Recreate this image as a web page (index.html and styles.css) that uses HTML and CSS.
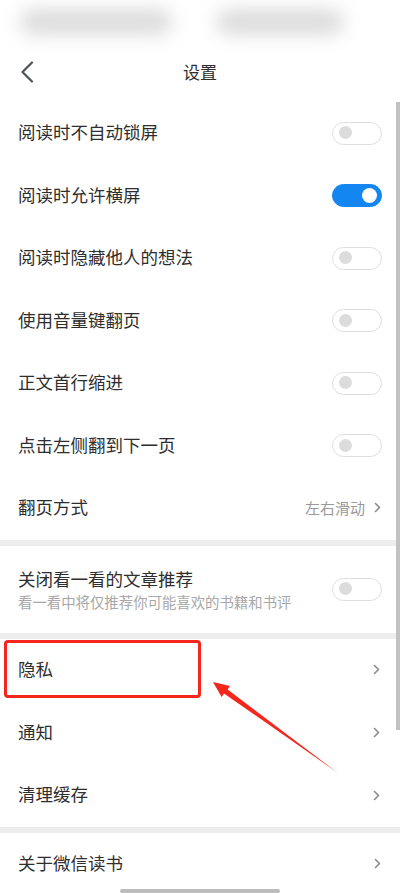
FILE: index.html
```html
<!DOCTYPE html>
<html lang="zh-CN">
<head>
    <meta charset="UTF-8">
    <meta name="viewport" content="width=device-width, initial-scale=1.0">
    <title>设置</title>
    <link rel="stylesheet" href="styles.css">
</head>
<body>
<div class="pantalla">
    <!-- Barra de estado (difuminada) -->
    <div class="estado">
        <div class="mancha mancha-a"></div>
        <div class="mancha mancha-b"></div>
    </div>

    <!-- Cabecera -->
    <header class="cabecera">
        <svg class="atras" width="14" height="22" viewBox="0 0 14 22">
            <path d="M12 1.5 L2.5 11 L12 20.5" fill="none" stroke="#4d5257" stroke-width="2.2" stroke-linecap="round" stroke-linejoin="round"/>
        </svg>
        <h1 class="titulo">设置</h1>
    </header>

    <!-- Grupo lectura -->
    <section class="grupo grupo-lectura">
        <div class="fila"><span class="texto">阅读时不自动锁屏</span><span class="interruptor"></span></div>
        <div class="fila"><span class="texto">阅读时允许横屏</span><span class="interruptor activo"></span></div>
        <div class="fila"><span class="texto">阅读时隐藏他人的想法</span><span class="interruptor"></span></div>
        <div class="fila"><span class="texto">使用音量键翻页</span><span class="interruptor"></span></div>
        <div class="fila"><span class="texto">正文首行缩进</span><span class="interruptor"></span></div>
        <div class="fila"><span class="texto">点击左侧翻到下一页</span><span class="interruptor"></span></div>
        <div class="fila">
            <span class="texto">翻页方式</span>
            <span class="valor">左右滑动
                <svg class="flecha" width="7" height="11" viewBox="0 0 7 11"><path d="M1.5 1.5 L5.5 5.5 L1.5 9.5" fill="none" stroke="#8a8a8a" stroke-width="1.6" stroke-linecap="round" stroke-linejoin="round"/></svg>
            </span>
        </div>
    </section>

    <div class="separador"></div>

    <!-- Grupo recomendaciones -->
    <section class="grupo">
        <div class="fila fila-doble">
            <div>
                <div class="texto">关闭看一看的文章推荐</div>
                <div class="subtexto">看一看中将仅推荐你可能喜欢的书籍和书评</div>
            </div>
            <span class="interruptor"></span>
        </div>
    </section>

    <div class="separador"></div>

    <!-- Grupo general -->
    <section class="grupo grupo-general">
        <div class="fila"><span class="texto">隐私</span><svg class="flecha" width="7" height="11" viewBox="0 0 7 11"><path d="M1.5 1.5 L5.5 5.5 L1.5 9.5" fill="none" stroke="#8a8a8a" stroke-width="1.6" stroke-linecap="round" stroke-linejoin="round"/></svg></div>
        <div class="fila"><span class="texto">通知</span><svg class="flecha" width="7" height="11" viewBox="0 0 7 11"><path d="M1.5 1.5 L5.5 5.5 L1.5 9.5" fill="none" stroke="#8a8a8a" stroke-width="1.6" stroke-linecap="round" stroke-linejoin="round"/></svg></div>
        <div class="fila"><span class="texto">清理缓存</span><svg class="flecha" width="7" height="11" viewBox="0 0 7 11"><path d="M1.5 1.5 L5.5 5.5 L1.5 9.5" fill="none" stroke="#8a8a8a" stroke-width="1.6" stroke-linecap="round" stroke-linejoin="round"/></svg></div>
    </section>

    <div class="separador"></div>

    <section class="grupo">
        <div class="fila"><span class="texto">关于微信读书</span><svg class="flecha" width="7" height="11" viewBox="0 0 7 11"><path d="M1.5 1.5 L5.5 5.5 L1.5 9.5" fill="none" stroke="#8a8a8a" stroke-width="1.6" stroke-linecap="round" stroke-linejoin="round"/></svg></div>
    </section>

    <!-- Indicador de inicio -->
    <div class="indicador"></div>

    <!-- Barra de desplazamiento -->
    <div class="scroll"></div>

    <!-- Anotaciones: recuadro y flecha roja -->
    <div class="recuadro"></div>
    <svg class="anotacion" width="400" height="893" viewBox="0 0 400 893">
        <polygon points="213,682 230,686 227.6,689.6 338,773 224,693.4 221.6,697" fill="#f5261c"/>
    </svg>
</div>
</body>
</html>
```

FILE: styles.css
```css
/* Base */
body {
    margin: 0;
    background: #fff;
    font-family: "Noto Sans CJK SC", "Noto Sans", sans-serif;
    color: #2e2e2e;
}

.pantalla {
    position: relative;
    width: 400px;
    height: 893px;
    overflow: hidden;
    background: #fff;
}

/* Barra de estado */
.estado {
    height: 44px;
    display: flex;
    gap: 44px;
    padding: 9px 0 0 20px;
    box-sizing: border-box;
}

.mancha {
    height: 26px;
    border-radius: 13px;
    background: #dcdcdc;
    filter: blur(9px);
}

.mancha-a {
    width: 152px;
}

.mancha-b {
    width: 128px;
}

/* Cabecera */
.cabecera {
    height: 58px;
    display: flex;
    align-items: center;
    justify-content: center;
    position: relative;
}

.atras {
    position: absolute;
    left: 20px;
    top: 17px;
}

.titulo {
    margin: 0 0 4px 0;
    font-size: 17px;
    font-weight: normal;
    color: #2e2e2e;
}

/* Grupos y filas */
.fila {
    height: 62.5px;
    display: flex;
    align-items: center;
    justify-content: space-between;
    padding: 0 18px 0 18px;
}

.grupo-general .fila {
    height: 62.7px;
    padding-right: 19px;
}

.grupo .fila > .flecha {
    margin-right: 1px;
}

.texto {
    font-size: 17.5px;
    color: #2e2e2e;
}

.fila > .texto {
    margin-bottom: 3px;
}

.fila-doble {
    height: 87px;
    box-sizing: border-box;
}

.subtexto {
    font-size: 14.4px;
    color: #a8a8a8;
    margin-top: 0;
}

.valor {
    display: flex;
    align-items: center;
    gap: 9px;
    font-size: 15px;
    color: #9a9a9a;
    margin-right: 1px;
    margin-bottom: 2px;
}

.separador {
    height: 6px;
    background: #ededed;
}

/* Interruptores */
.interruptor {
    position: relative;
    width: 50px;
    height: 23px;
    border: 1.5px solid #dedede;
    border-radius: 13px;
    box-sizing: border-box;
    background: #fff;
}

.interruptor::after {
    content: "";
    position: absolute;
    left: 6px;
    top: 3.5px;
    width: 13px;
    height: 13px;
    border-radius: 50%;
    background: #dcdcdc;
}

.interruptor.activo {
    background: #1386f1;
    border-color: #1386f1;
}

.interruptor.activo::after {
    left: auto;
    right: 4px;
    top: 2.5px;
    width: 15px;
    height: 15px;
    background: #fff;
}

/* Indicador y scroll */
.indicador {
    position: absolute;
    left: 120px;
    bottom: 0;
    width: 160px;
    height: 4px;
    border-radius: 2px;
    background: #bdbdbd;
}

.scroll {
    position: absolute;
    right: 0;
    top: 102px;
    width: 4px;
    height: 628px;
    background: #c2c2c2;
}

/* Anotaciones */
.recuadro {
    position: absolute;
    left: 4px;
    top: 640px;
    width: 197px;
    height: 58px;
    border: 3px solid #f5261c;
    border-radius: 4px;
    box-sizing: border-box;
}

.anotacion {
    position: absolute;
    left: 0;
    top: 0;
    pointer-events: none;
}
```
